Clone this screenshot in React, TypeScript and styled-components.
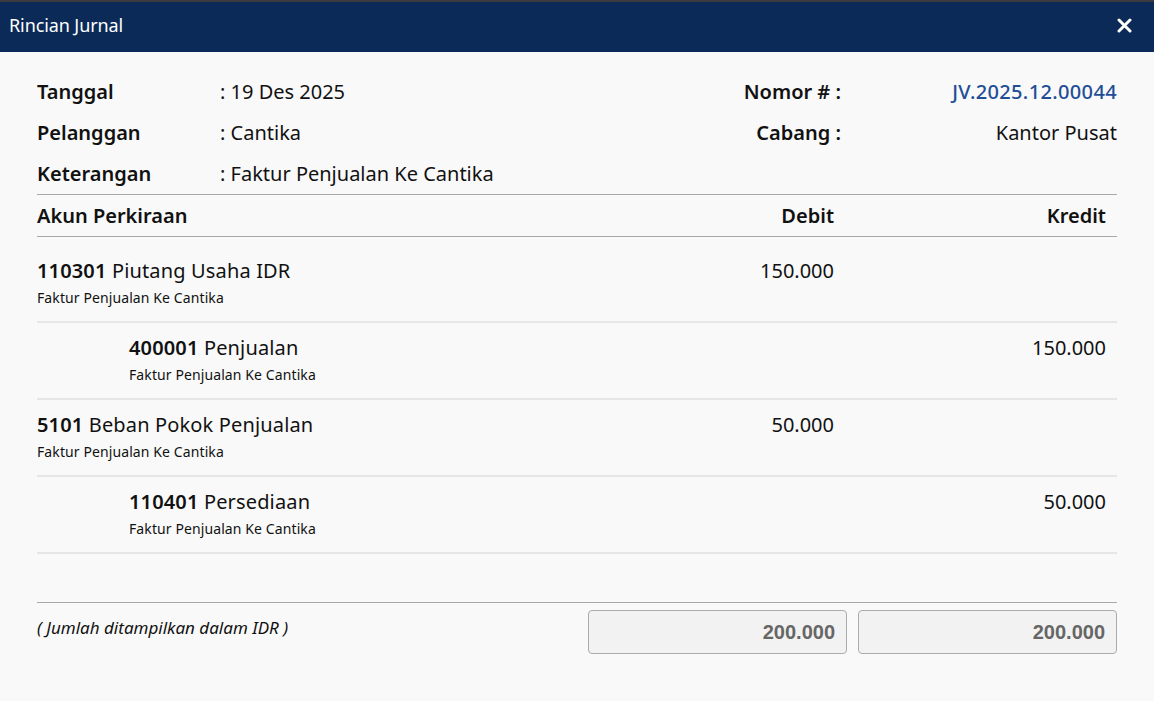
import React from "react";
import styled, { createGlobalStyle } from "styled-components";

const Global = createGlobalStyle`
  html, body { margin: 0; padding: 0; background: #f9f9f9; }
  body { font-family: "Noto Sans", "Open Sans", sans-serif; color: #111; }
  * { box-sizing: border-box; }
`;

const Page = styled.div`
  width: 1154px;
  height: 701px;
  display: flex;
  flex-direction: column;
  background: #f9f9f9;
  overflow: hidden;
`;

const BackStrip = styled.div`
  height: 2px;
  background: #3b3b3f;
`;

const TitleBar = styled.div`
  height: 50px;
  background: #0b2a57;
  display: flex;
  align-items: center;
  justify-content: space-between;
  padding: 0 20px 4px 9px;
`;

const Title = styled.div`
  color: #fff;
  font-size: 18px;
  letter-spacing: -0.1px;
`;

const CloseBtn = styled.button`
  border: 0;
  background: transparent;
  padding: 0;
  width: 20px;
  height: 20px;
  display: flex;
  align-items: center;
  justify-content: center;
  cursor: pointer;
`;

const Body = styled.div`
  flex: 1;
  padding: 19px 37px 0 37px;
  display: flex;
  flex-direction: column;
`;

const InfoGrid = styled.div`
  display: grid;
  grid-template-columns: 183px 1fr 200px 276px;
  grid-auto-rows: 41px;
  align-items: center;
  border-bottom: 1px solid #a8a8a8;
  font-size: 20px;
`;

const InfoLabel = styled.div<{ $right?: boolean }>`
  font-weight: 600;
  text-align: ${(p) => (p.$right ? "right" : "left")};
  white-space: nowrap;
`;

const InfoValue = styled.div<{ $right?: boolean; $link?: boolean }>`
  text-align: ${(p) => (p.$right ? "right" : "left")};
  color: ${(p) => (p.$link ? "#1f4e96" : "#111")};
  font-weight: ${(p) => (p.$link ? 500 : 400)};
  letter-spacing: ${(p) => (p.$link ? "0.35px" : "0")};
  white-space: nowrap;
`;

const TableRow = styled.div`
  display: grid;
  grid-template-columns: 1fr 259px 259px;
  column-gap: 11px;
`;

const HeadRow = styled(TableRow)`
  height: 42px;
  align-items: center;
  border-bottom: 1px solid #a8a8a8;
  font-size: 20px;
  font-weight: 600;
`;

const HeadCell = styled.div<{ $num?: boolean; $pr?: number }>`
  text-align: ${(p) => (p.$num ? "right" : "left")};
  padding-right: ${(p) => p.$pr ?? 0}px;
`;

const Entries = styled.div`
  padding-top: 9px;
`;

const EntryRow = styled(TableRow)`
  height: 77px;
  border-bottom: 2px solid #e6e6e6;
  padding-top: 11px;
`;

const AccountCell = styled.div<{ $indent?: boolean }>`
  padding-left: ${(p) => (p.$indent ? 92 : 0)}px;
  display: flex;
  flex-direction: column;
`;

const AccountName = styled.div`
  font-size: 20px;
  line-height: 27px;
  letter-spacing: 0.15px;
  white-space: nowrap;
`;

const Code = styled.span`
  font-weight: 600;
`;

const Memo = styled.div`
  font-size: 14px;
  line-height: 20px;
  margin-top: 4px;
  letter-spacing: 0.1px;
  white-space: nowrap;
`;

const Amount = styled.div<{ $pr: number }>`
  text-align: right;
  font-size: 20px;
  line-height: 27px;
  padding-right: ${(p) => p.$pr}px;
`;

const Spacer = styled.div`
  height: 48px;
`;

const Footer = styled.div`
  border-top: 1px solid #a8a8a8;
  padding-top: 7px;
  display: grid;
  grid-template-columns: 1fr 259px 259px;
  column-gap: 11px;
  align-items: start;
`;

const Note = styled.div`
  font-style: italic;
  font-size: 17px;
  padding-top: 6px;
  color: #111;
`;

const TotalBox = styled.div`
  height: 44px;
  border: 1px solid #ababab;
  border-radius: 4px;
  background: #f2f2f2;
  display: flex;
  align-items: center;
  justify-content: flex-end;
  padding-right: 11px;
  font-family: "Liberation Sans", Arial, sans-serif;
  font-weight: 700;
  font-size: 20px;
  color: #666;
`;

type Entry = { code: string; name: string; memo: string; debit?: string; kredit?: string; indent?: boolean };

const entries: Entry[] = [
  { code: "110301", name: "Piutang Usaha IDR", memo: "Faktur Penjualan Ke Cantika", debit: "150.000" },
  { code: "400001", name: "Penjualan", memo: "Faktur Penjualan Ke Cantika", kredit: "150.000", indent: true },
  { code: "5101", name: "Beban Pokok Penjualan", memo: "Faktur Penjualan Ke Cantika", debit: "50.000" },
  { code: "110401", name: "Persediaan", memo: "Faktur Penjualan Ke Cantika", kredit: "50.000", indent: true },
];

export default function App() {
  return (
    <Page>
      <Global />
      <BackStrip />
      <TitleBar>
        <Title>Rincian Jurnal</Title>
        <CloseBtn aria-label="Tutup">
          <svg width="15" height="15" viewBox="0 0 15 15">
            <path d="M2 2 L13 13 M13 2 L2 13" stroke="#fff" strokeWidth="3" strokeLinecap="round" />
          </svg>
        </CloseBtn>
      </TitleBar>
      <Body>
        <InfoGrid>
          <InfoLabel>Tanggal</InfoLabel>
          <InfoValue>: 19 Des 2025</InfoValue>
          <InfoLabel $right>Nomor # :</InfoLabel>
          <InfoValue $right $link>JV.2025.12.00044</InfoValue>
          <InfoLabel>Pelanggan</InfoLabel>
          <InfoValue>: Cantika</InfoValue>
          <InfoLabel $right>Cabang :</InfoLabel>
          <InfoValue $right>Kantor Pusat</InfoValue>
          <InfoLabel>Keterangan</InfoLabel>
          <InfoValue>: Faktur Penjualan Ke Cantika</InfoValue>
          <div />
          <div />
        </InfoGrid>
        <HeadRow>
          <HeadCell>Akun Perkiraan</HeadCell>
          <HeadCell $num $pr={13}>Debit</HeadCell>
          <HeadCell $num $pr={11}>Kredit</HeadCell>
        </HeadRow>
        <Entries>
          {entries.map((e) => (
            <EntryRow key={e.code}>
              <AccountCell $indent={e.indent}>
                <AccountName>
                  <Code>{e.code}</Code> {e.name}
                </AccountName>
                <Memo>{e.memo}</Memo>
              </AccountCell>
              <Amount $pr={13}>{e.debit ?? ""}</Amount>
              <Amount $pr={11}>{e.kredit ?? ""}</Amount>
            </EntryRow>
          ))}
        </Entries>
        <Spacer />
        <Footer>
          <Note>( Jumlah ditampilkan dalam IDR )</Note>
          <TotalBox>200.000</TotalBox>
          <TotalBox>200.000</TotalBox>
        </Footer>
      </Body>
    </Page>
  );
}
